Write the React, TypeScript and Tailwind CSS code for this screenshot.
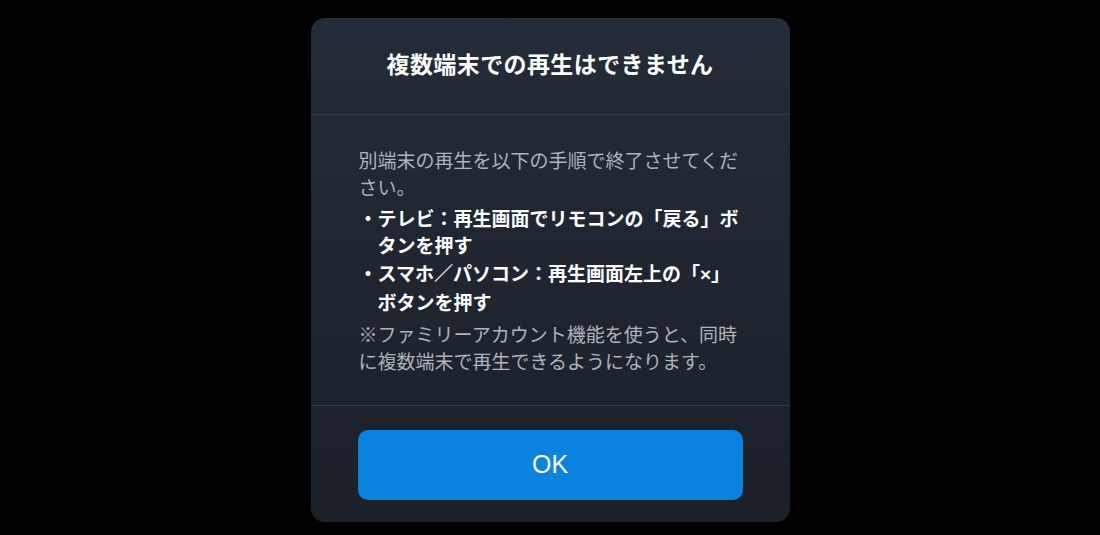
import React from "react";

export default function App() {
  const jp = { fontFamily: '"Noto Sans CJK JP", "Noto Sans", sans-serif' };
  return (
    <div className="w-full h-[535px] bg-black flex justify-center items-start pt-[18px]" style={jp}>
      <div className="w-[479px] h-[504px] rounded-[14px] bg-gradient-to-b from-[#232c38] to-[#1b2029] flex flex-col overflow-hidden">
        <div className="h-[96px] flex items-center justify-center pb-[5px]">
          <h1 className="text-[23px] font-bold text-white leading-none tracking-[0.4px]">
            複数端末での再生はできません
          </h1>
        </div>
        <div className="h-px bg-[#353d48]" />
        <div className="h-[290px] px-[48px] pt-[31px] text-[19px] leading-[27px]">
          <p className="text-[#aeb3ba]">別端末の再生を以下の手順で終了させてください。</p>
          <ul className="mt-[4px] text-white font-bold">
            <li className="pl-[19px] -indent-[19px]">・テレビ：再生画面でリモコンの「戻る」ボタンを押す</li>
            <li className="pl-[19px] -indent-[19px] mt-px">
              ・スマホ／パソコン：再生画面左上の「<span style={{ fontFamily: '"Liberation Sans", sans-serif' }} className="font-bold">×</span>」ボタンを押す
            </li>
          </ul>
          <p className="mt-[5px] text-[#aeb3ba]">※ファミリーアカウント機能を使うと、同時に複数端末で再生できるようになります。</p>
        </div>
        <div className="h-px bg-[#353d48]" />
        <div className="flex-1 px-[47px] pt-[24px]">
          <button className="w-full h-[70px] rounded-[10px] bg-[#0a82e0] text-white text-[25px] flex items-center justify-center" style={{ fontFamily: '"Liberation Sans", Arial, sans-serif' }}>
            OK
          </button>
        </div>
      </div>
    </div>
  );
}
